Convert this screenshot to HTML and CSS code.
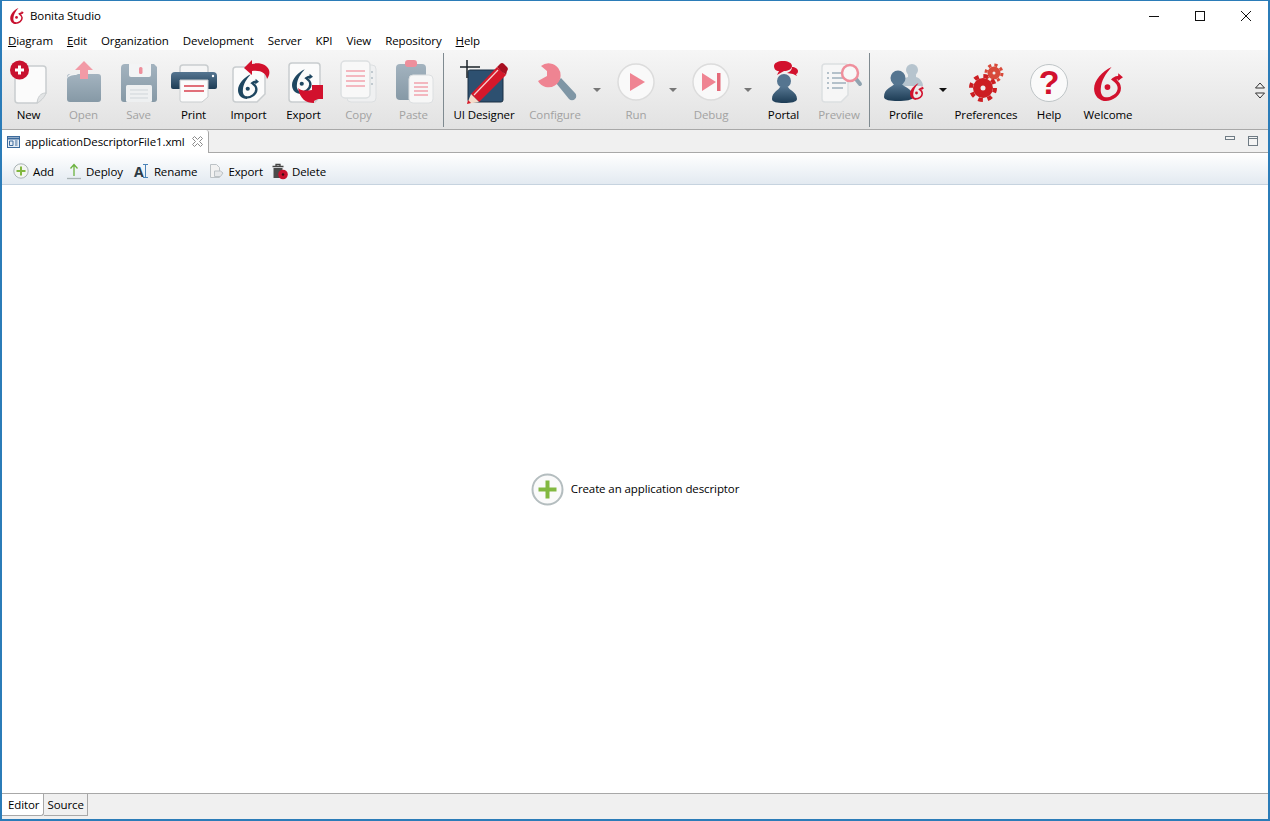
FILE: index.html
```html
<!DOCTYPE html>
<html>
  <head>
    <meta charset="UTF-8" />
    <title>Bonita Studio</title>
    <link rel="stylesheet" href="styles.css">
  </head>
  <body>
    <svg class="defs" width="0" height="0">
      <symbol id="logo" viewBox="0 0 28 33">
        <path d="M17 0C8 4 0 13 0 21c0 7 5 12 12 12v-3.500c-4 0-6-4-5.500-8.500C7 13 11 7 17 0z" fill="currentColor" />
        <path d="M11 31.300c7 0 13.500-5 13.500-11 0-4-3-6.500-5.500-8.300 1.500-1.300 3.500-1.800 6-1.800" fill="none" stroke="currentColor" stroke-width="3.200" />
        <path d="M23.500 6l4.500 4-5 3.500z" fill="currentColor" />
        <circle cx="13" cy="19.500" r="2.800" fill="currentColor" />
      </symbol>
      <linearGradient id="slate" x1="0" y1="0" x2="0" y2="1">
        <stop offset="0" stop-color="#a3b3bf" />
        <stop offset="1" stop-color="#8699a6" />
      </linearGradient>
      <linearGradient id="navy" x1="0" y1="0" x2="0" y2="1">
        <stop offset="0" stop-color="#557590" />
        <stop offset="1" stop-color="#1d3c55" />
      </linearGradient>
    </svg>

    <div class="window">
      <div class="titlebar">
        <svg class="title-logo" width="14" height="16"><use href="#logo" /></svg>
        <span class="title-text">Bonita Studio</span>
        <div class="window-buttons">
          <svg width="12" height="12" viewBox="0 0 12 12"><line x1="1" y1="6.500" x2="11" y2="6.500" stroke="#111" /></svg>
          <svg width="12" height="12" viewBox="0 0 12 12"><rect x="1.500" y="1.500" width="9" height="9" fill="none" stroke="#111" /></svg>
          <svg width="12" height="12" viewBox="0 0 12 12"><path d="M1 1l10 10M11 1L1 11" fill="none" stroke="#111" /></svg>
        </div>
      </div>

      <div class="menubar">
        <span><u>D</u>iagram</span>
        <span><u>E</u>dit</span>
        <span>Organization</span>
        <span>Development</span>
        <span>Server</span>
        <span>KPI</span>
        <span>View</span>
        <span>Repository</span>
        <span><u>H</u>elp</span>
      </div>

      <div class="toolbar">
        <div class="tool">
          <svg class="icon" viewBox="0 0 48 48">
            <path d="M13 8h25a3 3 0 0 1 3 3v24l-9 10H13a3 3 0 0 1-3-3V11a3 3 0 0 1 3-3z" fill="#fbfbfb" stroke="#c9cdcf" stroke-width="1.500" />
            <path d="M41 35c-3 0-8 1-9 10 3-1 8-6 9-10z" fill="#e2e4e5" stroke="#c9cdcf" />
            <circle cx="14.500" cy="12" r="9.500" fill="#c8102e" />
            <path d="M14.500 7.500v9M10 12h9" stroke="#fff" stroke-width="3" />
          </svg>
          <span>New</span>
        </div>
        <div class="tool off">
          <svg class="icon" viewBox="0 0 48 48">
            <path d="M10 16h28a3 3 0 0 1 3 3v22a3 3 0 0 1-3 3H10a3 3 0 0 1-3-3V19a3 3 0 0 1 3-3z" fill="url(#slate)" />
            <path d="M7 21c0-3 2-5 5-5h6l-2 1c-4 0-8 1-9 4z" fill="#f2f3f4" />
            <path d="M24 3l9 9h-5v9h-8v-9h-5z" fill="#f29aa6" />
          </svg>
          <span>Open</span>
        </div>
        <div class="tool off">
          <svg class="icon" viewBox="0 0 48 48">
            <path d="M10 6h29l3 3v32a3 3 0 0 1-3 3H9a3 3 0 0 1-3-3V10a4 4 0 0 1 4-4z" fill="url(#slate)" />
            <path d="M14 6h22v11a2 2 0 0 1-2 2H16a2 2 0 0 1-2-2z" fill="#f3f4f5" />
            <rect x="24" y="9" width="3.500" height="7" rx="1.500" fill="#ee8f9c" />
            <rect x="11" y="27" width="26" height="17" rx="1.500" fill="#eef0f1" />
            <path d="M15 32h18M15 36h18M15 40h18" stroke="#cfd5d9" />
          </svg>
          <span>Save</span>
        </div>
        <div class="tool">
          <svg class="icon" viewBox="0 0 48 48">
            <path d="M10 15V10a3 3 0 0 1 3-3h22a3 3 0 0 1 3 3v5z" fill="#f5f5f5" stroke="#c9cdcf" stroke-width="1.500" />
            <path d="M5 14h38a4 4 0 0 1 4 4v11a2 2 0 0 1-2 2H3a2 2 0 0 1-2-2V18a4 4 0 0 1 4-4z" fill="url(#navy)" />
            <circle cx="43" cy="18" r="1.200" fill="#fff" />
            <path d="M10 22h28v17l-6 5H12a2 2 0 0 1-2-2z" fill="#fbfbfb" stroke="#c9cdcf" />
            <path d="M14 28h20M14 33h20" stroke="#d9424f" stroke-width="1.500" />
          </svg>
          <span>Print</span>
        </div>
        <div class="tool">
          <svg class="icon" viewBox="0 0 48 48">
            <path d="M11 9h26a3 3 0 0 1 3 3v24l-8 8H11a3 3 0 0 1-3-3V12a3 3 0 0 1 3-3z" fill="#fbfbfb" stroke="#c9cdcf" stroke-width="1.500" />
            <svg x="13" y="16" width="21" height="25" color="#1e4660"><use href="#logo" /></svg>
            <path d="M19 10l8-8v4c8-2 15 1 17 6 1 3 0 6-2 9-1-6-6-9-15-8v4z" fill="#d2112d" />
          </svg>
          <span>Import</span>
        </div>
        <div class="tool">
          <svg class="icon" viewBox="0 0 48 48">
            <path d="M12 5h25a3 3 0 0 1 3 3v31l-5 5H12a3 3 0 0 1-3-3V8a3 3 0 0 1 3-3z" fill="#fbfbfb" stroke="#c9cdcf" stroke-width="1.500" />
            <svg x="12" y="11" width="21" height="25" color="#1e4660"><use href="#logo" /></svg>
            <path d="M18 30c3 3 8 3 14 2v-5h11v14h-5l-4 2v2c-8 0-14-4-16-15z" fill="#d2112d" />
          </svg>
          <span>Export</span>
        </div>
        <div class="tool off">
          <svg class="icon" viewBox="0 0 48 48">
            <rect x="12" y="7" width="29" height="37" rx="4" fill="#eff0f1" stroke="#dcdfe1" />
            <rect x="6" y="3" width="29" height="37" rx="4" fill="#f8f8f8" stroke="#dcdfe1" stroke-width="1.500" />
            <path d="M11 13h19M11 18h19M11 23h19M11 28h19" stroke="#f2a3ad" stroke-width="1.300" />
            <path d="M37 13v2M37 19v2M37 25v2" stroke="#a9b6bf" stroke-width="1.300" />
          </svg>
          <span>Copy</span>
        </div>
        <div class="tool off">
          <svg class="icon" viewBox="0 0 48 48">
            <rect x="6" y="6" width="30" height="36" rx="4" fill="url(#slate)" />
            <rect x="15" y="2" width="12" height="7" rx="3" fill="#ee8f9c" />
            <rect x="19" y="17" width="24" height="28" rx="4" fill="#f7f7f7" stroke="#dcdfe1" />
            <path d="M24 25h14M24 29h14M24 33h14M24 37h14" stroke="#f2a3ad" stroke-width="1.300" />
          </svg>
          <span>Paste</span>
        </div>
        <div class="separator"></div>
        <div class="tool tool-designer">
          <svg class="icon" viewBox="0 0 48 48">
            <rect x="8" y="12" width="35" height="32" rx="2" fill="#2d5070" stroke="#1a2f42" />
            <path d="M0 9h20M7 2v18" stroke="#1b2329" stroke-width="1.500" />
            <path d="M11 36L37 9l9 8-27 27z" fill="#d5182a" />
            <path d="M37 9l3-3a3 3 0 0 1 4 0l3 3a3 3 0 0 1 0 4l-1 4z" fill="#a80f20" />
            <path d="M11 36l8 8-12 2z" fill="#f4dccb" />
            <path d="M7 46l1-4 3 3z" fill="#d5182a" />
            <path d="M14 37L38 12" stroke="#f7d0d0" stroke-width="1.200" />
          </svg>
          <span>UI Designer</span>
        </div>
        <div class="tool off tool-configure">
          <svg class="icon" viewBox="0 0 48 48">
            <path d="M25 25l5-5 14 15a3.500 3.500 0 0 1-6 6z" fill="#7f96a5" />
            <path d="M10 8A12 12 0 1 1 7 23l9-5v-5z" fill="#ef8492" />
          </svg>
          <span>Configure</span>
        </div>
        <div class="drop drop-off"></div>
        <div class="tool off tool-run">
          <svg class="icon" viewBox="0 0 48 48">
            <circle cx="24" cy="24" r="18" fill="#f9f9f9" stroke="#dcdcdc" stroke-width="1.500" />
            <path d="M18 15l15 9-15 9z" fill="#ef8492" />
          </svg>
          <span>Run</span>
        </div>
        <div class="drop drop-off drop-narrow"></div>
        <div class="tool off tool-debug">
          <svg class="icon" viewBox="0 0 48 48">
            <circle cx="24" cy="24" r="18" fill="#f9f9f9" stroke="#dcdcdc" stroke-width="1.500" />
            <path d="M15 15l14 9-14 9z" fill="#ef8492" />
            <rect x="30" y="15" width="3.500" height="18" fill="#e46a7a" />
          </svg>
          <span>Debug</span>
        </div>
        <div class="drop drop-off drop-narrow"></div>
        <div class="tool">
          <svg class="icon" viewBox="0 0 48 48">
            <path d="M14 8c0-3 4-5 9-5s9 2 9 5c0 3-4 5-8 5l-7 4 2-4c-3 0-5-2-5-5z" fill="#d2112d" />
            <path d="M32 9c3 0 6 2 6 4 0 2-1 3-2 3l1 2-4-2-6-1c3-1 5-3 5-6z" fill="#d2112d" />
            <circle cx="24" cy="23" r="7" fill="#557590" />
            <path d="M20 29h8c1 3 9 5 9 12 0 3-6 4-13 4s-12-1-12-4c0-7 7-9 8-12z" fill="url(#navy)" />
          </svg>
          <span>Portal</span>
        </div>
        <div class="tool off tool-preview">
          <svg class="icon" viewBox="0 0 48 48">
            <path d="M10 6h20a3 3 0 0 1 3 3v28l-7 7H10a3 3 0 0 1-3-3V9a3 3 0 0 1 3-3z" fill="#f6f6f6" stroke="#dcdfe1" stroke-width="1.500" />
            <path d="M12 15h2M17 15h9M12 20h2M17 20h14M12 25h2M17 25h14M12 30h2M17 30h11" stroke="#9fb0bc" stroke-width="1.300" />
            <path d="M41 21l4 5" stroke="#8fa3b0" stroke-width="4" stroke-linecap="round" />
            <circle cx="35" cy="15" r="8" fill="#f8f8f8" stroke="#ef8f9c" stroke-width="2.500" />
          </svg>
          <span>Preview</span>
        </div>
        <div class="separator"></div>
        <div class="tool tool-profile">
          <svg class="icon" viewBox="0 0 48 48">
            <circle cx="30" cy="12" r="6" fill="#b6c4ce" />
            <path d="M26 17h8v2c4 1 7 5 7 9H19c0-4 3-8 7-9z" fill="#b6c4ce" />
            <circle cx="16" cy="20" r="7.500" fill="#557590" />
            <path d="M12 26h8c1 3 11 4 11 13 0 3-7 4-15 4s-14-1-14-4c0-9 9-10 10-13z" fill="url(#navy)" />
            <svg x="28" y="24" width="14" height="19" color="#d2112d"><use href="#logo" /></svg>
          </svg>
          <span>Profile</span>
        </div>
        <div class="drop drop-dark"></div>
        <div class="tool tool-prefs">
          <svg class="icon" viewBox="0 0 48 48">
            <circle cx="32" cy="15" r="6.500" fill="#d84a3a" />
            <circle cx="32" cy="15" r="8" fill="none" stroke="#d84a3a" stroke-width="3" stroke-dasharray="3.200 3.100" />
            <circle cx="32" cy="15" r="1.500" fill="#eee" />
            <circle cx="21" cy="30" r="10" fill="#cc1e22" />
            <circle cx="21" cy="30" r="12" fill="none" stroke="#cc1e22" stroke-width="4" stroke-dasharray="4.700 4.725" />
            <circle cx="21" cy="30" r="2.500" fill="#eee" />
          </svg>
          <span>Preferences</span>
        </div>
        <div class="tool tool-help">
          <div class="help-circle">?</div>
          <span>Help</span>
        </div>
        <div class="tool tool-welcome">
          <svg class="welcome-logo" width="29" height="34"><use href="#logo" /></svg>
          <span>Welcome</span>
        </div>
        <div class="toolbar-more">
          <svg width="10" height="17" viewBox="0 0 10 17">
            <path d="M0.500 6l4.500-5 4.500 5zM0.500 11l4.500 5 4.500-5z" fill="#f4f4f4" stroke="#333" />
          </svg>
        </div>
      </div>

      <div class="tabbar">
        <div class="tab">
          <svg width="13" height="12" viewBox="0 0 13 12">
            <rect x="0.500" y="0.500" width="12" height="11" fill="#e8eef5" stroke="#3d6b9c" />
            <path d="M1 2.500h11" stroke="#3d6b9c" stroke-width="2" />
            <path d="M2.500 5h3.500v4.500H2.500zM8 5h2.500M8 7h2.500M8 9h2.500" fill="none" stroke="#3d6b9c" />
          </svg>
          <span class="tab-name">applicationDescriptorFile1.xml</span>
          <svg class="tab-close" width="11" height="11" viewBox="0 0 11 11">
            <path d="M0.500 2.500L2.500 0.500 5.500 3.500 8.500 0.500 10.500 2.500 7.500 5.500 10.500 8.500 8.500 10.500 5.500 7.500 2.500 10.500 0.500 8.500 3.500 5.500z" fill="#fff" stroke="#8a8a8a" />
          </svg>
        </div>
        <div class="view-buttons">
          <svg width="10" height="5"><rect x="0.500" y="0.500" width="9" height="3" fill="#f4f4f4" stroke="#6f7b84" /></svg>
          <svg width="10" height="10"><rect x="0.500" y="0.500" width="9" height="9" fill="#f4f4f4" stroke="#6f7b84" /><path d="M0 2.500h10" stroke="#6f7b84" /></svg>
        </div>
      </div>

      <div class="formbar">
        <div class="action">
          <svg width="16" height="16" viewBox="0 0 16 16">
            <circle cx="8" cy="8" r="7.200" fill="#f3f5f2" stroke="#a9b3b5" />
            <path d="M8 3.500v9M3.500 8h9" stroke="#82b840" stroke-width="2" />
          </svg>
          <span>Add</span>
        </div>
        <div class="action">
          <svg width="16" height="18" viewBox="0 0 16 18">
            <path d="M8 14V3M4.500 6.500L8 2.500l3.500 4" fill="none" stroke="#6cb33f" stroke-width="1.300" />
            <path d="M1 16.500h14" stroke="#a9b3b5" stroke-width="1.300" />
          </svg>
          <span>Deploy</span>
        </div>
        <div class="action">
          <span class="rename-icon"><b>A</b><i></i></span>
          <span>Rename</span>
        </div>
        <div class="action action-off">
          <svg width="16" height="16" viewBox="0 0 16 16">
            <path d="M2.500 1.500h6l3 3v10h-9z" fill="#f2f2f2" stroke="#bcc2c6" />
            <path d="M6.500 8h6l2.500 2-2.500 3.500h-6z" fill="#e6e8ea" stroke="#bcc2c6" />
          </svg>
          <span>Export</span>
        </div>
        <div class="action">
          <svg width="16" height="17" viewBox="0 0 16 17">
            <path d="M0.500 3.500h11M4 3V1.500h4V3" fill="none" stroke="#444" stroke-width="1.300" />
            <path d="M1.500 5h9v10h-9z" fill="#4a4a4a" />
            <circle cx="11" cy="11.500" r="4.800" fill="#c8102e" />
            <circle cx="11" cy="11.500" r="1.200" fill="#3a0a12" />
          </svg>
          <span>Delete</span>
        </div>
      </div>

      <div class="editor">
        <div class="create">
          <svg width="33" height="33" viewBox="0 0 33 33">
            <circle cx="16.500" cy="16.500" r="15" fill="#fafafa" stroke="#b4bdbf" stroke-width="2" />
            <path d="M16.500 7.500v18M7.500 16.500h18" stroke="#82b840" stroke-width="4" />
          </svg>
          <span class="create-label">Create an application descriptor</span>
        </div>
      </div>

      <div class="pagebar">
        <div class="page-tab page-tab-on">Editor</div>
        <div class="page-tab">Source</div>
      </div>
    </div>
  </body>
</html>
```

FILE: styles.css
```css
html, body {
  margin: 0;
  padding: 0;
}
body {
  font-family: "Open Sans", "Noto Sans", sans-serif;
  font-size: 11.5px;
  letter-spacing: -0.1px;
  color: #000;
  background: #fff;
}
.defs {
  position: absolute;
}
.window {
  box-sizing: border-box;
  width: 1270px;
  height: 821px;
  display: flex;
  flex-direction: column;
  border: 2px solid #2b7cb8;
  border-top-width: 1px;
  background: #fff;
  overflow: hidden;
}

/* title + menu */
.titlebar {
  height: 29px;
  display: flex;
  align-items: center;
  flex: none;
}
.title-logo {
  margin-left: 8px;
  color: #c8102e;
}
.title-text {
  margin-left: 6px;
}
.window-buttons {
  margin-left: auto;
  display: flex;
  gap: 34px;
  margin-right: 16px;
}
.menubar {
  height: 20px;
  flex: none;
  display: flex;
  align-items: center;
  gap: 14px;
  padding: 1px 0 0 6px;
  box-sizing: border-box;
}

/* main toolbar */
.toolbar {
  height: 80px;
  flex: none;
  display: flex;
  background: linear-gradient(#f6f6f6, #e2e2e2);
  border-bottom: 1px solid #a8a8a8;
  box-sizing: border-box;
}
.tool {
  width: 55px;
  flex: none;
  display: flex;
  flex-direction: column;
  align-items: center;
  padding-top: 8px;
  box-sizing: border-box;
  white-space: nowrap;
}
.tool:first-child {
  margin-left: -1px;
}
.tool > span {
  line-height: 16px;
  margin-top: 1px;
}
.tool.off > span {
  color: #a2a2a2;
}
.icon {
  width: 48px;
  height: 48px;
  flex: none;
}
.separator {
  width: 1px;
  height: 74px;
  margin: 3px 2px 0 2px;
  background: #7f8a90;
  flex: none;
}
.drop {
  width: 18px;
  flex: none;
  position: relative;
}
.drop::after {
  content: "";
  position: absolute;
  left: 5px;
  top: 38px;
  border: 4px solid transparent;
  border-top: 4px solid #777;
}
.drop-narrow {
  width: 15px;
}
.drop-narrow::after {
  left: 3px;
}
.drop-dark {
  width: 7px;
}
.drop-dark::after {
  left: -1px;
  border-top-color: #111;
}
.tool-designer {
  width: 76px;
}
.tool-configure {
  width: 66px;
}
.tool-run {
  width: 60px;
}
.tool-debug {
  width: 60px;
}
.tool-preview {
  width: 56px;
}
.tool-profile {
  width: 68px;
}
.tool-prefs {
  width: 78px;
}
.tool-help {
  width: 48px;
}
.help-circle {
  box-sizing: border-box;
  width: 38px;
  height: 38px;
  margin: 6px 0 4px;
  border: 1.500px solid #bfc5c7;
  border-radius: 50%;
  background: #fafafa;
  color: #d2112d;
  font-family: "Liberation Sans", sans-serif;
  font-size: 34px;
  font-weight: bold;
  line-height: 35px;
  text-align: center;
}
.tool-welcome {
  width: 70px;
}
.welcome-logo {
  color: #d2112d;
  margin: 9px 0 5px;
}
.toolbar-more {
  margin-left: auto;
  margin-right: 3px;
  padding-top: 32px;
}

/* editor tab row */
.tabbar {
  height: 23px;
  flex: none;
  display: flex;
  background: #f0f0f0;
  border-bottom: 1px solid #a8a8a8;
  box-sizing: border-box;
}
.tab {
  display: flex;
  align-items: center;
  box-sizing: border-box;
  width: 207px;
  height: 23px;
  padding-left: 5px;
  background: #fff;
  border-right: 1px solid #a8a8a8;
  border-top-right-radius: 3px;
}
.tab-name {
  margin-left: 5px;
}
.tab-close {
  margin-left: 7px;
}
.view-buttons {
  margin-left: auto;
  display: flex;
  gap: 13px;
  align-items: flex-start;
  padding: 6px 10px 0 0;
}

/* form actions */
.formbar {
  height: 32px;
  flex: none;
  display: flex;
  align-items: center;
  gap: 11px;
  padding: 5px 0 0 11px;
  box-sizing: border-box;
  background: linear-gradient(#fff, #e3eaf1);
  border-bottom: 1px solid #c6d3df;
}
.action {
  display: flex;
  align-items: center;
  gap: 4px;
}
.action:first-child {
  margin-right: 1px;
}
.action-off {
  margin-right: -2px;
}
.rename-icon {
  display: flex;
  align-items: center;
  width: 16px;
}
.rename-icon b {
  font-size: 14px;
  color: #2b3a45;
}
.rename-icon i {
  width: 5px;
  height: 12px;
  border: solid #4a83b8;
  border-width: 1px 0;
  background: linear-gradient(#4a83b8, #4a83b8) center / 1px 100% no-repeat;
}

.editor {
  flex: 1;
  display: flex;
  align-items: center;
  justify-content: center;
}
.create {
  display: flex;
  align-items: center;
  gap: 7px;
}
.create-label {
  margin-bottom: 2px;
}

/* bottom tabs */
.pagebar {
  height: 26px;
  flex: none;
  display: flex;
  background: #f0f0f0;
  border-top: 1px solid #a8a8a8;
  box-sizing: border-box;
}
.page-tab {
  padding: 0 3px;
  height: 22px;
  line-height: 21px;
  box-sizing: border-box;
  border-right: 1px solid #a8a8a8;
  border-bottom: 1px solid #a8a8a8;
}
.page-tab-on {
  padding: 0 4px 0 6px;
  background: #fff;
  border-bottom-right-radius: 3px;
}
```
